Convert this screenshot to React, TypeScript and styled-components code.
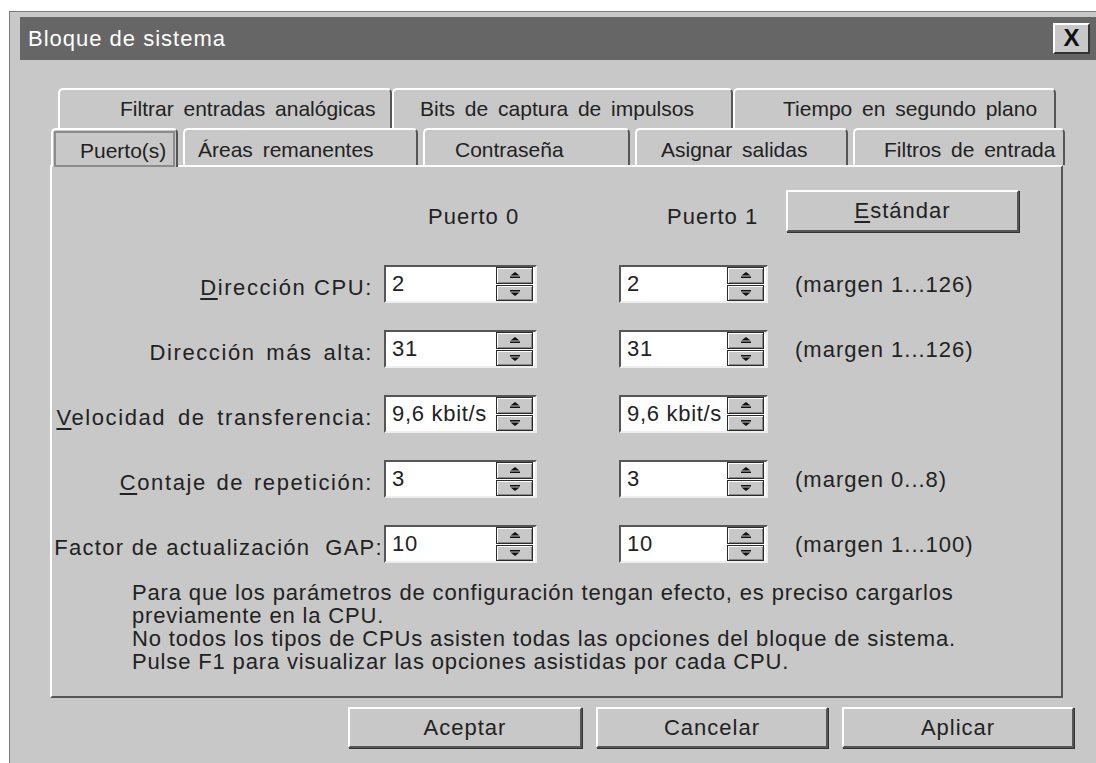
import React from 'react'
import styled, { createGlobalStyle } from 'styled-components'

const GlobalStyle = createGlobalStyle`
  html, body {
    margin: 0;
    padding: 0;
    background: #fff;
  }
  body {
    font-family: 'Liberation Sans', Arial, Helvetica, sans-serif;
  }
`

const FACE = '#c8c8c8'
const SHADOW = '#565656'

const Window = styled.div`
  box-sizing: border-box;
  margin: 11px 0 0 9px;
  height: 752px;
  border-top: 1px solid #7a7a7a;
  border-left: 1px solid #7a7a7a;
  background: ${FACE};
  padding: 5px 0 0 10px;
  overflow: hidden;
  color: #222;
  font-size: 22px;
  letter-spacing: 1px;
`

const TitleBar = styled.div`
  height: 43px;
  display: flex;
  align-items: center;
  justify-content: space-between;
  background: #666;
  color: #fff;
  padding: 0 6px 0 8px;
`

const Title = styled.span`
  font-size: 22px;
  letter-spacing: 1px;
`

const CloseButton = styled.button`
  box-sizing: border-box;
  width: 37px;
  height: 31px;
  padding: 0 0 1px;
  background: ${FACE};
  border: 2px solid;
  border-color: #fff #333 #333 #fff;
  font-family: inherit;
  font-size: 24px;
  font-weight: bold;
  color: #111;
  line-height: 1;
`

const Body = styled.div`
  padding-top: 28px;
`

const TabRow = styled.div<{ $indent: number; $height: number; $front?: boolean }>`
  display: flex;
  gap: ${p => (p.$front ? 5 : 0)}px;
  margin-left: ${p => p.$indent}px;
  height: ${p => p.$height}px;
  position: relative;
  z-index: ${p => (p.$front ? 1 : 0)};
  font-size: 21px;
  letter-spacing: 0;
  word-spacing: 4px;
`

const Tab = styled.div<{ $width: number; $pad: number; $active?: boolean; $drop?: number }>`
  box-sizing: border-box;
  flex: none;
  width: ${p => p.$width}px;
  height: ${p => (p.$active ? 'calc(100% + 2px)' : '100%')};
  display: flex;
  align-items: ${p => (p.$active ? 'stretch' : 'center')};
  padding-left: ${p => (p.$active ? 1 : p.$pad)}px;
  padding-top: ${p => (p.$active ? 1 : p.$drop ?? 0)}px;
  background: ${FACE};
  border-top: 2px solid #fff;
  border-left: 2px solid #fff;
  border-right: 2px solid ${SHADOW};
  border-top-left-radius: 5px;
  border-top-right-radius: 5px;
  white-space: nowrap;
  overflow: hidden;
`

const Focus = styled.div<{ $pad: number }>`
  flex: 1;
  display: flex;
  align-items: center;
  padding-left: ${p => p.$pad}px;
  padding-top: 3px;
  margin-right: 1px;
  border: 2px solid #8c8c8c;
`

const Panel = styled.div`
  box-sizing: border-box;
  margin-left: 30px;
  width: 1013px;
  height: 533px;
  border: 2px solid;
  border-color: #fff ${SHADOW} ${SHADOW} #fff;
  padding-top: 23px;
`

const Grid = styled.div<{ $gap?: number }>`
  display: grid;
  grid-template-columns: 332px 235px 176px 1fr;
  row-gap: ${p => p.$gap ?? 0}px;
  align-items: center;
`

const HeaderGrid = styled(Grid)`
  margin-bottom: 33px;
  align-items: end;
`

const ColumnHead = styled.span<{ $pad: number }>`
  padding-left: ${p => p.$pad}px;
  padding-bottom: 2px;
`

const Label = styled.label<{ $spread?: number; $flush?: boolean }>`
  position: relative;
  z-index: 1;
  text-align: right;
  padding-right: ${p => (p.$flush ? 1 : 11)}px;
  letter-spacing: ${p => (p.$flush ? 1.3 : 1.6)}px;
  word-spacing: ${p => p.$spread ?? 0}px;
  padding-top: 8px;
  white-space: nowrap;
`

const Key = styled.span`
  text-decoration: underline;
  text-underline-offset: 3px;
`

const SpinBox = styled.div<{ $width: number }>`
  box-sizing: border-box;
  width: ${p => p.$width}px;
  height: 38px;
  display: flex;
  align-items: center;
  background: #fff;
  border: 2px solid;
  border-color: ${SHADOW} #eee #eee ${SHADOW};
  padding: 0 2px 0 0;
`

const SpinValue = styled.span`
  flex: 1;
  padding-left: 6px;
  white-space: nowrap;
  letter-spacing: 0.7px;
`

const SpinButtons = styled.div`
  display: flex;
  flex-direction: column;
  width: 37px;
  height: 34px;
`

const SpinButton = styled.div`
  box-sizing: border-box;
  flex: 1;
  display: flex;
  align-items: center;
  justify-content: center;
  background: ${FACE};
  border: 1px solid #2a2a2a;
  box-shadow: inset 1px 1px #fff, inset -1px -1px #8a8a8a;
  & + & {
    margin-top: 1px;
  }
`

const Range = styled.span`
  padding-top: 2px;
`

const PushButton = styled.button<{ $width: number; $height: number }>`
  box-sizing: border-box;
  width: ${p => p.$width}px;
  height: ${p => p.$height}px;
  background: ${FACE};
  border: 2px solid;
  border-color: #fff ${SHADOW} ${SHADOW} #fff;
  box-shadow: 1px 1px #333;
  font-family: inherit;
  font-size: 22px;
  letter-spacing: 1px;
  color: #222;
  padding: 0;
`

const DefaultsButton = styled(PushButton)`
  margin-left: -9px;
`

const Note = styled.p`
  margin: 18px 0 0;
  padding-left: 80px;
  line-height: 23px;
  letter-spacing: 0.85px;
`

const Footer = styled.div`
  display: flex;
  justify-content: flex-end;
  gap: 14px;
  margin-top: 9px;
  padding-right: 22px;
`

function Arrow({ down }: { down?: boolean }) {
  return (
    <svg width="12" height="8" viewBox="0 0 12 8">
      {down ? (
        <>
          <rect x="1" y="1" width="10" height="1.5" fill="#111" />
          <path d="M1.5 3.5 H10.5 L6 7 Z" fill="#111" />
        </>
      ) : (
        <>
          <path d="M6 1 L10.5 4.5 H1.5 Z" fill="#111" />
          <rect x="1" y="5.5" width="10" height="1.5" fill="#111" />
        </>
      )}
    </svg>
  )
}

function Spinner({ value, width }: { value: string; width: number }) {
  return (
    <SpinBox $width={width}>
      <SpinValue>{value}</SpinValue>
      <SpinButtons>
        <SpinButton>
          <Arrow />
        </SpinButton>
        <SpinButton>
          <Arrow down />
        </SpinButton>
      </SpinButtons>
    </SpinBox>
  )
}

const backTabs = [
  { text: 'Filtrar entradas analógicas', width: 334, pad: 60 },
  { text: 'Bits de captura de impulsos', width: 341, pad: 26 },
  { text: 'Tiempo en segundo plano', width: 323, pad: 48 },
]

const frontTabs = [
  { text: 'Áreas remanentes', width: 235, pad: 13 },
  { text: 'Contraseña', width: 207, pad: 30 },
  { text: 'Asignar salidas', width: 213, pad: 24 },
  { text: 'Filtros de entrada', width: 212, pad: 29 },
]

type Field = {
  label: React.ReactNode
  spread?: number
  flush?: boolean
  port0: string
  port1: string
  range?: string
}

const fields: Field[] = [
  { label: <><Key>D</Key>irección CPU:</>, port0: '2', port1: '2', range: '(margen 1...126)' },
  { label: 'Dirección más alta:', spread: 3, port0: '31', port1: '31', range: '(margen 1...126)' },
  { label: <><Key>V</Key>elocidad de transferencia:</>, spread: 4, port0: '9,6 kbit/s', port1: '9,6 kbit/s' },
  { label: <><Key>C</Key>ontaje de repetición:</>, spread: 2, port0: '3', port1: '3', range: '(margen 0...8)' },
  { label: 'Factor de actualización\u00a0 GAP:', flush: true, port0: '10', port1: '10', range: '(margen 1...100)' },
]

export default function App() {
  return (
    <>
      <GlobalStyle />
      <Window>
        <TitleBar>
          <Title>Bloque de sistema</Title>
          <CloseButton>X</CloseButton>
        </TitleBar>
        <Body>
          <TabRow $indent={38} $height={40}>
            {backTabs.map(t => (
              <Tab key={t.text} $width={t.width} $pad={t.pad}>
                {t.text}
              </Tab>
            ))}
          </TabRow>
          <TabRow $indent={31} $height={37} $front>
            <Tab $width={127} $pad={0} $active>
              <Focus $pad={24}>Puerto(s)</Focus>
            </Tab>
            {frontTabs.map(t => (
              <Tab key={t.text} $width={t.width} $pad={t.pad} $drop={4}>
                {t.text}
              </Tab>
            ))}
          </TabRow>
          <Panel>
            <HeaderGrid>
              <span />
              <ColumnHead $pad={44}>Puerto 0</ColumnHead>
              <ColumnHead $pad={48}>Puerto 1</ColumnHead>
              <DefaultsButton $width={233} $height={42}>
                <Key>E</Key>stándar
              </DefaultsButton>
            </HeaderGrid>
            <Grid $gap={27}>
              {fields.map((f, i) => (
                <React.Fragment key={i}>
                  <Label $spread={f.spread} $flush={f.flush}>
                    {f.label}
                  </Label>
                  <Spinner value={f.port0} width={153} />
                  <Spinner value={f.port1} width={149} />
                  <Range>{f.range}</Range>
                </React.Fragment>
              ))}
            </Grid>
            <Note>
              Para que los parámetros de configuración tengan efecto, es preciso cargarlos
              <br />
              previamente en la CPU.
              <br />
              No todos los tipos de CPUs asisten todas las opciones del bloque de sistema.
              <br />
              Pulse F1 para visualizar las opciones asistidas por cada CPU.
            </Note>
          </Panel>
          <Footer>
            <PushButton $width={234} $height={41}>Aceptar</PushButton>
            <PushButton $width={232} $height={41}>Cancelar</PushButton>
            <PushButton $width={232} $height={41}>Aplicar</PushButton>
          </Footer>
        </Body>
      </Window>
    </>
  )
}
